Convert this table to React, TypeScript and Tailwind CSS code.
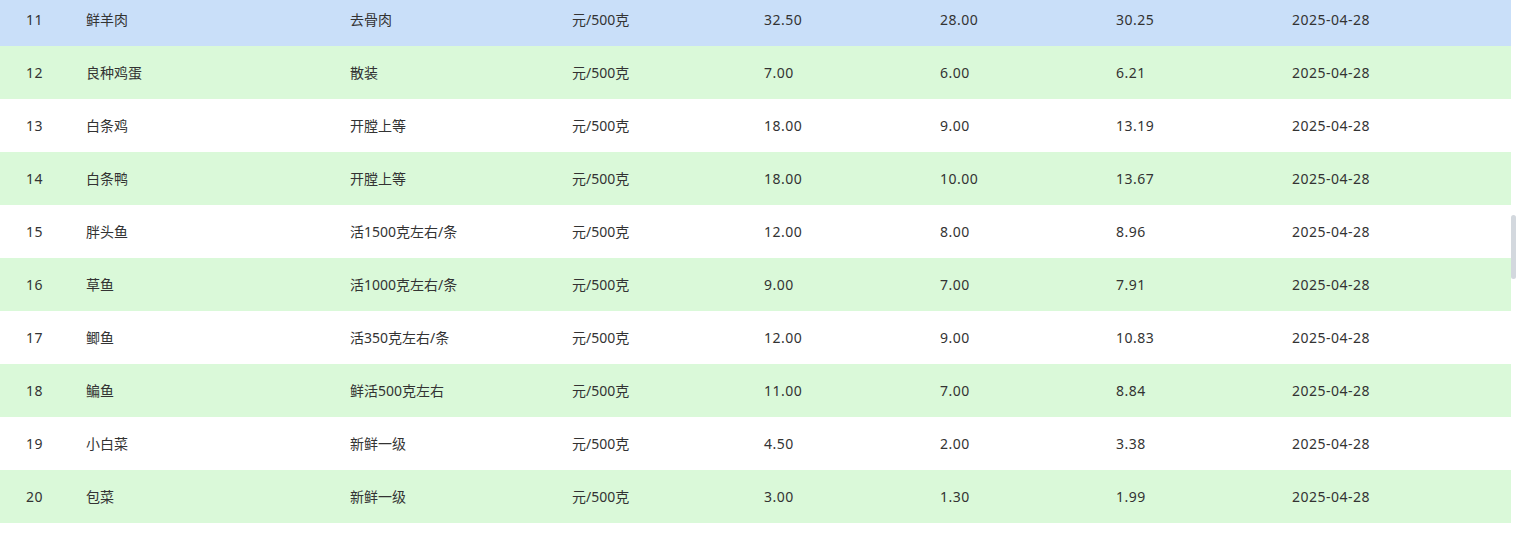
const rows = [
  ['11', '鲜羊肉', '去骨肉', '元/500克', '32.50', '28.00', '30.25', '2025-04-28'],
  ['12', '良种鸡蛋', '散装', '元/500克', '7.00', '6.00', '6.21', '2025-04-28'],
  ['13', '白条鸡', '开膛上等', '元/500克', '18.00', '9.00', '13.19', '2025-04-28'],
  ['14', '白条鸭', '开膛上等', '元/500克', '18.00', '10.00', '13.67', '2025-04-28'],
  ['15', '胖头鱼', '活1500克左右/条', '元/500克', '12.00', '8.00', '8.96', '2025-04-28'],
  ['16', '草鱼', '活1000克左右/条', '元/500克', '9.00', '7.00', '7.91', '2025-04-28'],
  ['17', '鲫鱼', '活350克左右/条', '元/500克', '12.00', '9.00', '10.83', '2025-04-28'],
  ['18', '鳊鱼', '鲜活500克左右', '元/500克', '11.00', '7.00', '8.84', '2025-04-28'],
  ['19', '小白菜', '新鲜一级', '元/500克', '4.50', '2.00', '3.38', '2025-04-28'],
  ['20', '包菜', '新鲜一级', '元/500克', '3.00', '1.30', '1.99', '2025-04-28'],
];

const rowBg = (i: number) => {
  if (i === 0) return 'bg-[#c9dff9]';
  return i % 2 === 1 ? 'bg-[#daf9d9]' : 'bg-white';
};

// numeric columns get a touch of tracking so the digits run as wide as the original
const numeric = [0, 4, 5, 6, 7];

export default function App() {
  return (
    <div
      className="flex h-[533px] w-[1516px] overflow-hidden bg-white text-[14px] text-[#333333]"
      style={{ fontFamily: '"Noto Sans", "Noto Sans CJK SC", sans-serif' }}
    >
      {/* table body */}
      <div className="w-[1511px] -mt-[7px]">
        {rows.map((r, i) => (
          <div
            key={r[0]}
            className={`grid h-[53px] grid-cols-[60px_264px_222px_192px_176px_176px_176px_1fr] items-center pl-[26px] ${rowBg(i)}`}
          >
            {r.map((c, j) => (
              <div key={j} className={numeric.includes(j) ? 'whitespace-nowrap tracking-[0.5px]' : 'whitespace-nowrap'}>
                {c}
              </div>
            ))}
          </div>
        ))}
      </div>

      {/* scrollbar */}
      <div className="w-[5px]">
        <div className="mt-[215px] h-[64px] w-[5px] rounded-[3px] bg-[#d3d8de]" />
      </div>
    </div>
  );
}
